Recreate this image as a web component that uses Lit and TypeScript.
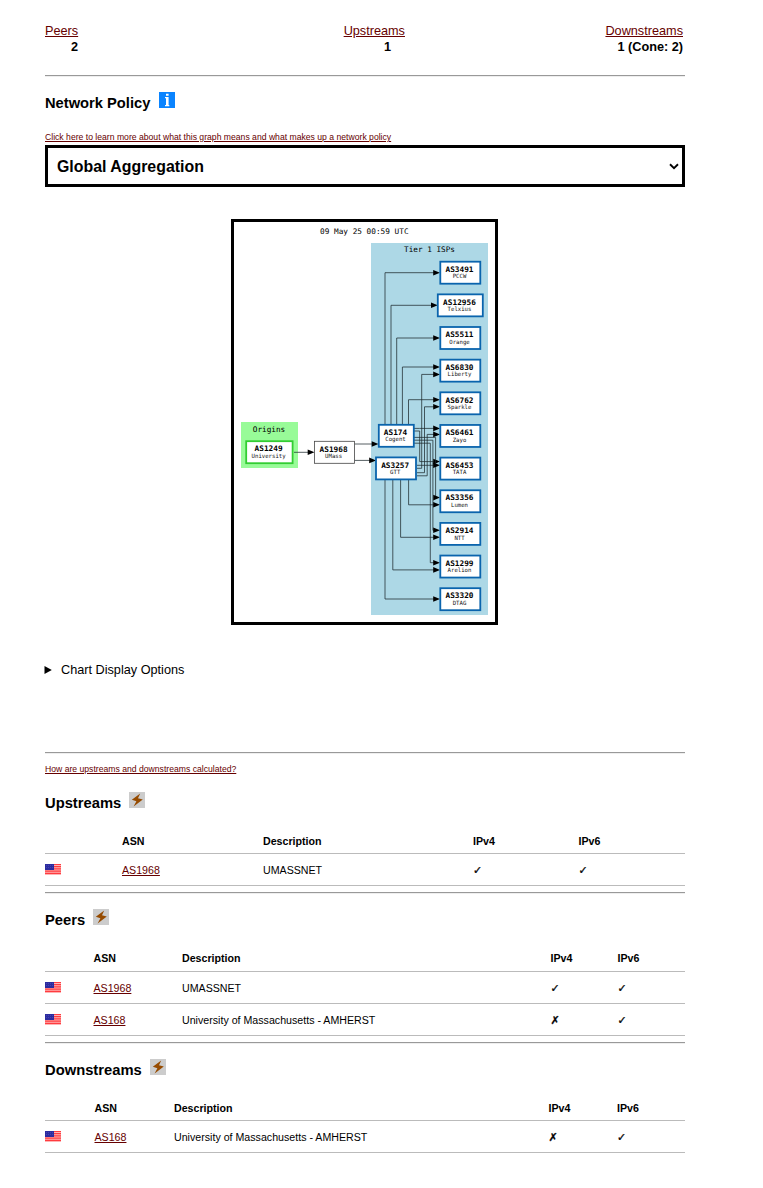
import { LitElement, html, svg, css } from "lit";
import { customElement, property } from "lit/decorators.js";

interface Row { asn: string; description: string; v4: boolean; v6: boolean; }

@customElement("asn-table")
class AsnTable extends LitElement {
  @property() heading = "";
  @property() variant = "";
  @property({ attribute: false }) rows: Row[] = [];

  static styles = css`
    :host { display: block; }
    .heading { display: flex; align-items: flex-start; gap: 8px; height: 38px; font-size: 14.75px; font-weight: bold; line-height: 17px; }
    .heading span { padding-top: 3px; }
    .icon { display: block; width: 16px; height: 16px; }
    .row { display: grid; align-items: center; height: 31px; border-bottom: 1px solid #bbb; font-size: 10.65px; }
    .head { height: 21px; padding-bottom: 2px; font-weight: bold; }
    .head.peers { height: 22px; }
    .upstreams { grid-template-columns: 77px 141px 210px 105.5px 1fr; }
    .peers { grid-template-columns: 48.5px 88.5px 368.5px 67px 1fr; }
    .downstreams { grid-template-columns: 49.5px 79.5px 374.5px 68.5px 1fr; }
    .flag { display: block; width: 16px; height: 11px; margin-top: -1px; }
    .mark { padding-top: 2px; font-family: "DejaVu Sans", sans-serif; font-size: 11px; line-height: 12px; font-weight: bold; -webkit-text-stroke: .3px #000; }
    a { color: #660000; text-decoration: underline; text-underline-offset: 1px; }
  `;

  render() {
    return html`
      <div class="heading">
        <span>${this.heading}</span>
        <svg class="icon" viewBox="0 0 16 16"><rect width="16" height="16" fill="#ccc"/><path d="M11.2 1.4 2.8 7.8 7.4 9.2 4.6 14.6 13.8 7.4 9 6.2Z" fill="#964b00"/></svg>
      </div>
      <div class="row head ${this.variant}"><span></span><span>ASN</span><span>Description</span><span>IPv4</span><span>IPv6</span></div>
      ${this.rows.map((r) => html`
        <div class="row ${this.variant}">
          <svg class="flag" viewBox="0 0 16 11">
            <rect width="16" height="11" fill="#ffb4b4"/>
            <path d="M0 .5H16M0 2.7H16M0 4.9H16M0 7.1H16M0 9.3H16" stroke="#ff3b3f" stroke-width="1.2"/>
            <rect width="9" height="6" fill="#2b2ba0"/>
            <path d="M1 1.5H9M1 3.5H9" stroke="#5454b8" stroke-width=".6" stroke-dasharray="1 1"/>
          </svg>
          <span><a>${r.asn}</a></span><span>${r.description}</span>
          <span class="mark">${r.v4 ? "✓" : "✗"}</span><span class="mark">${r.v6 ? "✓" : "✗"}</span>
        </div>`)}
    `;
  }
}

interface Node { x: number; y: number; w: number; asn: string; name: string; }

const TIER1: Node[] = [
  ["AS3491", "PCCW"], ["AS12956", "Telxius"], ["AS5511", "Orange"], ["AS6830", "Liberty"],
  ["AS6762", "Sparkle"], ["AS6461", "Zayo"], ["AS6453", "TATA"], ["AS3356", "Lumen"],
  ["AS2914", "NTT"], ["AS1299", "Arelion"], ["AS3320", "DTAG"],
].map(([asn, name], i) => ({ x: 460.3, y: 272.7 + i * 32.65, w: asn.length > 6 ? 45 : 40, asn, name }));
TIER1.push({ x: 396.3, y: 435.8, w: 35, asn: "AS174", name: "Cogent" });
TIER1.push({ x: 396, y: 468.4, w: 40, asn: "AS3257", name: "GTT" });

const EDGES: number[][] = [
  [385, 425, 385, 272.7, 440], [391, 425, 391, 305.3, 437.8], [396.7, 425, 396.7, 338, 440],
  [402.4, 425, 402.4, 367, 440], [408.5, 425, 408.5, 399.7, 440],
  [414, 428.4, 419.7, 428.4, 440], [414, 431, 419.7, 461.6, 440],
  [414, 437.4, 435.6, 497.6, 440], [414, 440.2, 432.9, 530.3, 440], [414, 443.2, 430.3, 562.7, 440],
  [417, 468.3, 421.7, 374.4, 440], [417, 472.7, 424.5, 406.8, 440], [417, 475.8, 427.2, 434.4, 440],
  [417, 465.3, 427, 465.3, 440],
  [385, 480, 385, 599, 440], [392.8, 480, 392.8, 569.9, 440], [400.6, 480, 400.6, 537.3, 440], [408.6, 480, 408.6, 504.8, 440],
  [294, 452.3, 300, 452.3, 314.5], [354.6, 444, 360, 444, 378.5], [354.6, 460.4, 360, 460.4, 376],
];

@customElement("policy-graph")
class PolicyGraph extends LitElement {
  static styles = css`
    :host { display: block; box-sizing: border-box; width: 267px; height: 406px; border: 3px solid #000; }
    svg { display: block; width: 261px; height: 400px; }
    text { font-family: "DejaVu Sans Mono", monospace; text-anchor: middle; fill: #000; }
    .title { font-size: 7.6px; }
    .asn { font-size: 7.6px; font-weight: bold; }
    .name { font-size: 5.8px; fill: #111; }
    .edge { fill: none; stroke: #1d292d; stroke-width: .75; }
  `;

  node(n: Node, stroke: string, width: number) {
    return svg`
      <rect x=${n.x - n.w / 2} y=${n.y - 11} width=${n.w} height="22" fill="#fff" stroke=${stroke} stroke-width=${width}></rect>
      <text class="asn" x=${n.x - 0.8} y=${n.y - 0.8} textLength=${n.asn.length * 4.68} lengthAdjust="spacingAndGlyphs">${n.asn}</text>
      <text class="name" x=${n.x - 0.8} y=${n.y + 5.6} textLength=${n.name.length * 3.4} lengthAdjust="spacingAndGlyphs">${n.name}</text>`;
  }

  render() {
    return html`<svg viewBox="234 222 261 400">
      <rect x="371" y="243" width="117" height="372" fill="#add8e6"/>
      <rect x="241" y="422" width="57" height="46" fill="#98fb98"/>
      <text class="title" x="364.3" y="234" textLength="88.5" lengthAdjust="spacingAndGlyphs">09 May 25 00:59 UTC</text>
      <text class="title" x="429.5" y="252" textLength="51" lengthAdjust="spacingAndGlyphs">Tier 1 ISPs</text>
      <text class="title" x="269" y="432" textLength="32.5" lengthAdjust="spacingAndGlyphs">Origins</text>
      ${EDGES.map(([x0, y0, x1, y1, x2]) => svg`
        <path class="edge" d=${`M${x0} ${y0}H${x1}V${y1}H${x2 - 6}`}></path>
        <path d=${`M${x2} ${y1}l-6.8 -2.8v5.6z`}></path>`)}
      ${TIER1.map((n) => this.node(n, "#0a64ad", 1.8))}
      ${this.node({ x: 269.4, y: 452.2, w: 46.4, asn: "AS1249", name: "University" }, "#32cd32", 1.8)}
      ${this.node({ x: 334.4, y: 452.3, w: 40, asn: "AS1968", name: "UMass" }, "#444", 0.8)}
    </svg>`;
  }
}

@customElement("app-root")
class AppRoot extends LitElement {
  static styles = css`
    :host { display: block; box-sizing: border-box; width: 763px; height: 1188px; padding: 23px 78px 0 45px; background: #fff; color: #000; font: 12.7px/16px "Liberation Sans", Arial, sans-serif; }
    a { color: #660000; text-decoration: underline; text-underline-offset: 1px; }
    .stats { display: flex; justify-content: space-between; height: 52px; padding-right: 2px; }
    .stat { text-align: right; }
    .mid { padding-left: 65px; }
    .stat b { display: block; }
    .mid b { padding-right: 14px; }
    .rule { height: 1px; border-top: 1px solid #999; background: #eee; }
    .heading { display: flex; gap: 9px; height: 39px; padding-top: 15px; font-size: 14.7px; font-weight: bold; line-height: 17px; }
    .heading span { padding-top: 3px; }
    .icon { display: block; width: 16px; height: 16px; }
    .small { display: block; font-size: 8.65px; line-height: 12px; }
    .select { display: flex; align-items: center; justify-content: space-between; box-sizing: border-box; height: 42px; margin-top: 2px; padding: 0 3px 0 9px; border: 3px solid #000; font-size: 15.9px; font-weight: bold; }
    .select span { padding-top: 1px; }
    .chevron { width: 10px; height: 7px; }
    .graph { display: flex; justify-content: center; padding: 32px 1px 0 0; }
    .details { display: flex; align-items: center; gap: 9px; height: 16px; margin: 37px 0 74px -1px; }
    .how { padding: 9px 0 17px; }
    .gap { margin-top: 6px; margin-bottom: 15px; }
  `;

  render() {
    const umass: Row = { asn: "AS1968", description: "UMASSNET", v4: true, v6: true };
    const amherst: Row = { asn: "AS168", description: "University of Massachusetts - AMHERST", v4: false, v6: true };
    return html`
      <div class="stats">
        <div class="stat"><a>Peers</a><b>2</b></div>
        <div class="stat mid"><a>Upstreams</a><b>1</b></div>
        <div class="stat"><a>Downstreams</a><b>1 (Cone: 2)</b></div>
      </div>
      <div class="rule"></div>
      <div class="heading">
        <span>Network Policy</span>
        <svg class="icon" viewBox="0 0 16 16"><rect width="16" height="16" fill="#0a84ff"/><path d="M7 1.7h2.6v2H7zM6 5h3.6v8h.7v1.3H6V13h1V6.3H6z" fill="#fff"/></svg>
      </div>
      <a class="small">Click here to learn more about what this graph means and what makes up a network policy</a>
      <div class="select"><span>Global Aggregation</span>
        <svg class="chevron" viewBox="0 0 10 7"><path d="M1 1.3 5 5.1 9 1.3" fill="none" stroke="#000" stroke-width="1.9"/></svg>
      </div>
      <div class="graph"><policy-graph></policy-graph></div>
      <div class="details"><svg width="8" height="8" viewBox="0 0 8 8"><path d="M.5 0 7.8 4 .5 8Z"/></svg><span>Chart Display Options</span></div>
      <div class="rule"></div>
      <div class="how"><a class="small">How are upstreams and downstreams calculated?</a></div>
      <asn-table heading="Upstreams" variant="upstreams" .rows=${[umass]}></asn-table>
      <div class="rule gap"></div>
      <asn-table heading="Peers" variant="peers" .rows=${[umass, amherst]}></asn-table>
      <div class="rule gap"></div>
      <asn-table heading="Downstreams" variant="downstreams" .rows=${[amherst]}></asn-table>
    `;
  }
}
